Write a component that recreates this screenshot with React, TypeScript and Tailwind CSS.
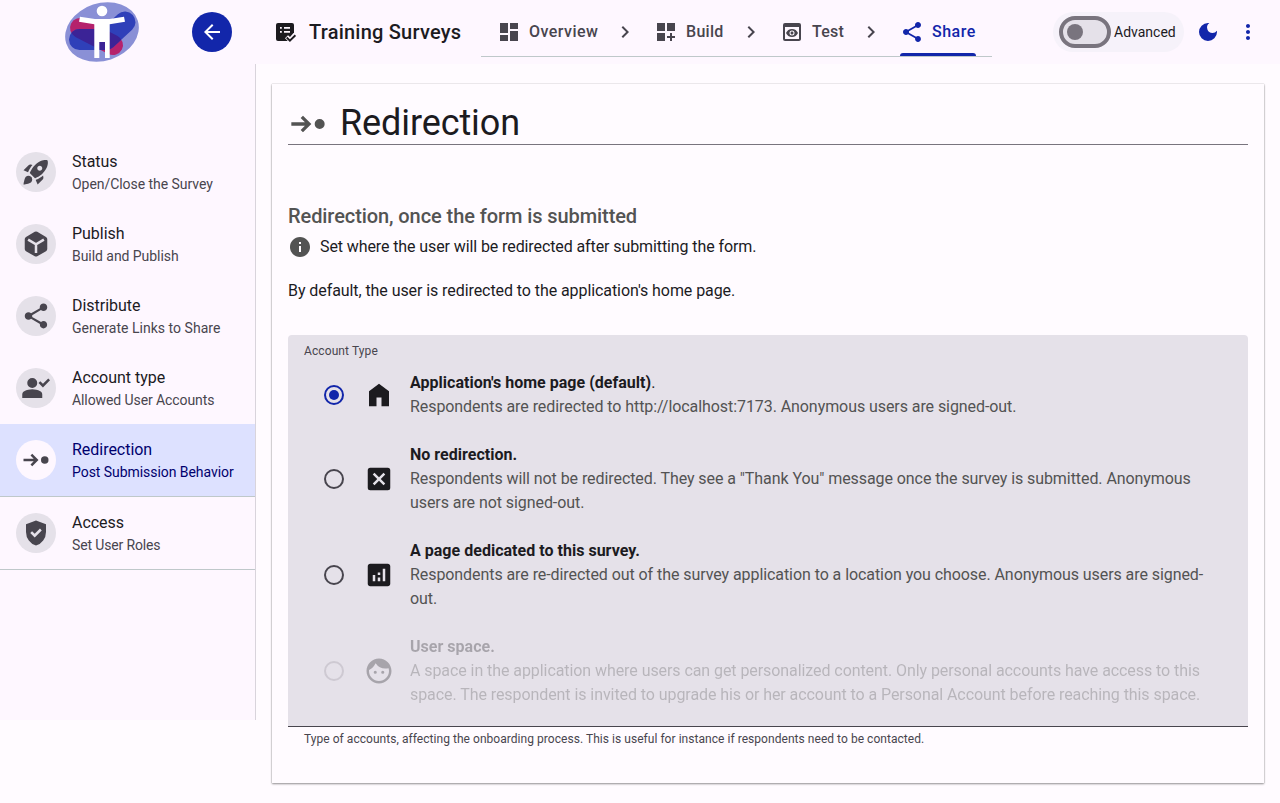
import React from "react";
import { MdDashboard, MdDashboardCustomize, MdPreview, MdShare, MdRocketLaunch, MdFace, MdAnalytics, MdDarkMode, MdMoreVert, MdChevronRight, MdArrowBack, MdInfo } from "react-icons/md";

type IconProps = { className?: string };

const Glyph = ({ d, className }: { d: string; className?: string }) => (
  <svg viewBox="0 0 24 24" fill="currentColor" fillRule="evenodd" className={className}>
    <path d={d} />
  </svg>
);

const StepIcon = (p: IconProps) => <Glyph {...p} d="M19 15a3 3 0 1 1 0-6 3 3 0 0 1 0 6zM9 17l-1.4-1.45L10.15 13H2v-2h8.15L7.6 8.4 9 7l5 5z" />;
const ShieldIcon = (p: IconProps) => <Glyph {...p} d="M12 22q-3.475-.875-5.737-3.988T4 11.1V5l8-3 8 3v6.1q0 3.8-2.262 6.913T12 22zM10.95 15.55l5.65-5.65-1.425-1.425-4.225 4.225-2.1-2.1L7.4 12z" />;
const PersonCheckIcon = (p: IconProps) => <Glyph {...p} d="M17.55 11.5 14 7.95l1.4-1.4 2.15 2.1 4.25-4.25 1.4 1.45zM9 12a4 4 0 1 1 0-8 4 4 0 0 1 0 8zM1 20v-2.8q0-.85.438-1.562T2.6 14.55q1.55-.775 3.15-1.162T9 13t3.25.388 3.15 1.162q.725.375 1.163 1.088T17 17.2V20z" />;
const HomeIcon = (p: IconProps) => <Glyph {...p} d="M4 21V9l8-6 8 6v12h-6v-7h-4v7z" />;
const CrossBoxIcon = (p: IconProps) => <Glyph {...p} d="M8.4 17l3.6-3.6 3.6 3.6 1.4-1.4-3.6-3.6L17 8.4 15.6 7 12 10.6 8.4 7 7 8.4l3.6 3.6L7 15.6zM5 21a2 2 0 0 1-2-2V5a2 2 0 0 1 2-2h14a2 2 0 0 1 2 2v14a2 2 0 0 1-2 2z" />;
const BoxIcon = ({ className }: IconProps) => (
  <svg viewBox="0 0 24 24" className={className}>
    <path fill="currentColor" d="M11 2.2a2 2 0 0 1 2 0l7 4.1a2 2 0 0 1 1 1.7v8a2 2 0 0 1-1 1.7l-7 4.1a2 2 0 0 1-2 0l-7-4.1A2 2 0 0 1 3 16V8a2 2 0 0 1 1-1.7z" />
    <path d="M5.7 8.500 12 12.200l6.300-3.700M12 12.200v7" fill="none" stroke="#e5e1e9" strokeWidth="2" />
  </svg>
);
const SurveyIcon = ({ className }: IconProps) => (
  <svg viewBox="0 0 24 24" className={className}>
    <rect x="3" y="3" width="18" height="18" rx="2" fill="currentColor" />
    <path d="M7 7h1.8v1.7H7zM11 7h6v1.7h-6zM7 11h1.8v1.7H7zM11 11h6v1.7h-6z" fill="#fef7ff" />
    <path d="m12 18.2 3-3 2 1.7L20.5 13H24v9h-8.2z" fill="#fef7ff" />
    <path d="m13.700 17.500 3.200 3.100 5.500-5.400" fill="none" stroke="currentColor" strokeWidth="1.9" />
  </svg>
);

const Logo = () => (
  <svg width="80" height="64" viewBox="0 0 80 64">
    <mask id="ribbon" maskUnits="userSpaceOnUse" x="0" y="0" width="80" height="64">
      <path d="M17.5 39.5H44L63 22" fill="none" stroke="#fff" strokeWidth="21" strokeLinecap="round" strokeLinejoin="round" />
    </mask>
    <ellipse cx="40" cy="32" rx="37.6" ry="28.8" fill="#8a90d6" transform="rotate(-18 40 32)" />
    <path d="M18 28 51 45" stroke="#b5226c" strokeWidth="20" strokeLinecap="round" />
    <path d="M17.5 39.5H44L63 22" fill="none" stroke="#2f40b9" strokeWidth="21" strokeLinecap="round" strokeLinejoin="round" />
    <path d="M18 28 51 45" stroke="#3b2396" strokeWidth="20" strokeLinecap="round" mask="url(#ribbon)" />
    <circle cx="40" cy="11" r="5.3" fill="#fff" />
    <path d="M18 16.7 33 19h14.500L62 16.700l1 5.100-15.300 2.400V58H43V42h-5.700v16h-5V24.200L17 21.800z" fill="#fff" />
  </svg>
);

const steps = [
  { label: "Overview", Icon: MdDashboard, width: "w-[101px]", tracking: "tracking-[0.45px]" },
  { label: "Build", Icon: MdDashboardCustomize, width: "w-[70px]", tracking: "tracking-[0.3px]" },
  { label: "Test", Icon: MdPreview, width: "w-[64px]", tracking: "tracking-[0.2px]" },
  { label: "Share", Icon: MdShare, width: "w-[76px]", tracking: "tracking-[0.5px]", active: true },
];

const nav = [
  { title: "Status", sub: "Open/Close the Survey", Icon: MdRocketLaunch },
  { title: "Publish", sub: "Build and Publish", Icon: BoxIcon },
  { title: "Distribute", sub: "Generate Links to Share", Icon: MdShare, tracking: "tracking-[0.03px]" },
  { title: "Account type", sub: "Allowed User Accounts", Icon: PersonCheckIcon, tracking: "tracking-[-0.09px]" },
  { title: "Redirection", sub: "Post Submission Behavior", Icon: StepIcon, active: true, line: true },
  { title: "Access", sub: "Set User Roles", Icon: ShieldIcon, line: true, tracking: "tracking-[-0.14px]" },
];

const options = [
  { title: "Application's home page (default)", tail: ".", text: "Respondents are redirected to http://localhost:7173. Anonymous users are signed-out.", Icon: HomeIcon, checked: true },
  { title: "No redirection.", text: "Respondents will not be redirected. They see a \"Thank You\" message once the survey is submitted. Anonymous users are not signed-out.", Icon: CrossBoxIcon },
  { title: "A page dedicated to this survey.", text: "Respondents are re-directed out of the survey application to a location you choose. Anonymous users are signed-out.", Icon: MdAnalytics },
  { title: "User space.", text: "A space in the application where users can get personalized content. Only personal accounts have access to this space. The respondent is invited to upgrade his or her account to a Personal Account before reaching this space.", Icon: MdFace, disabled: true },
];

function TopBar() {
  return (
    <header className="flex h-16 items-center bg-[#fef7ff]">
      <div className="ml-[62px] h-16 w-20"><Logo /></div>
      <button className="ml-[50px] grid size-10 place-items-center rounded-full bg-[#1226aa] text-white"><MdArrowBack className="size-6" /></button>
      <SurveyIcon className="ml-[41px] size-6" />
      <h1 className="ml-3 w-[172px] whitespace-nowrap text-[20px] font-medium tracking-[0.22px]">Training Surveys</h1>
      <nav className="mb-[7px] mt-auto flex h-[50px] w-[511px] border-b border-[#bfc8ca] pl-4">
        {steps.map(({ label, Icon, active, width, tracking }, i) => (
          <React.Fragment key={label}>
            {i > 0 && <MdChevronRight className="ml-[15px] mr-[17px] mt-[13px] size-6 shrink-0 text-[#48454e]" />}
            <a className={`flex h-[49px] shrink-0 flex-col justify-between ${width} ${active ? "text-[#1226aa]" : "text-[#48454e]"}`}>
              <span className={`mt-[13px] flex items-center gap-2 whitespace-nowrap text-[16px] font-medium leading-6 ${tracking}`}>
                <Icon className="size-6 shrink-0" />{label}
              </span>
              {active && <span className="h-[3px] rounded-t-[3px] bg-[#1226aa]" />}
            </a>
          </React.Fragment>
        ))}
      </nav>
      <div className="ml-[61px] flex h-10 w-[131px] items-center gap-[3px] rounded-full bg-[#f6f2fa] pl-[6px]">
        <span className="flex h-8 w-[52px] items-center rounded-full border-4 border-[#79747e] bg-[#e5e1e9] pl-1"><span className="size-4 rounded-full bg-[#79747e]" /></span>
        <span className="text-[14px]">Advanced</span>
      </div>
      <MdDarkMode className="ml-3 size-6 text-[#1226aa]" />
      <MdMoreVert className="ml-4 size-6 text-[#1226aa]" />
    </header>
  );
}

function SideNav() {
  return (
    <aside className="h-[656px] w-64 shrink-0 border-r border-[#d9d4dc] bg-[#fef7ff] pt-[72px]">
      {nav.map(({ title, sub, Icon, active, line, tracking }) => (
        <div key={title} className={`flex items-center gap-4 pl-4 ${line ? "h-[73px] border-b border-[#bfc8ca]" : "h-[72px]"} ${active ? "bg-[#dde1ff] text-[#00006e]" : ""}`}>
          <span className={`grid size-10 place-items-center rounded-full text-[#48454e] ${active ? "bg-[#fef7ff]" : "bg-[#e5e1e9]"}`}><Icon className="size-[30px]" /></span>
          <div className="whitespace-nowrap">
            <div className="text-[16px] leading-6 tracking-[-0.03px]">{title}</div>
            <div className={`text-[14px] leading-5 ${tracking ?? "tracking-[-0.05px]"} ${active ? "" : "text-[#48454e]"}`}>{sub}</div>
          </div>
        </div>
      ))}
    </aside>
  );
}

export default function App() {
  return (
    <div className="h-[803px] overflow-hidden bg-[#fffbff] font-['Roboto',sans-serif] text-[#1c1b1f]">
      <TopBar />
      <div className="flex">
        <SideNav />
        <main className="ml-4 mt-5 h-[699px] w-[992px] bg-[#fffbff] px-4 shadow-[0_1px_2px_0_rgba(0,0,0,0.4),0_0_1px_0_rgba(0,0,0,0.3)]">
          <div className="flex h-[61px] items-center border-b border-[#79747e] pt-[18px]">
            <StepIcon className="mt-px size-10 text-[#535353]" />
            <h2 className="ml-3 text-[36px] leading-[44px] tracking-[-0.1px]">Redirection</h2>
          </div>
          <h3 className="mt-[57px] text-[20px] font-medium leading-[28px] tracking-[-0.08px] text-[#535353]">Redirection, once the form is submitted</h3>
          <p className="mt-[5px] flex h-6 items-center gap-2 text-[16px] tracking-[-0.1px]"><MdInfo className="size-6 text-[#535353]" />Set where the user will be redirected after submitting the form.</p>
          <p className="mt-5 text-[16px] leading-6 tracking-[-0.075px]">By default, the user is redirected to the application's home page.</p>
          <section className="mt-8 h-[392px] rounded-t border-b border-[#48454e] bg-[#e5e1e9] px-4 pt-2">
            <div className="text-[12px] leading-4 tracking-[0.1px] text-[#48454e]">Account Type</div>
            <div className="flex flex-col gap-6 pt-3">
              {options.map(({ title, tail, text, Icon, checked, disabled }) => (
                <div key={title} className="flex items-center pl-5">
                  <span className={`grid size-5 shrink-0 place-items-center rounded-full border-2 ${checked ? "border-[#1226aa]" : "border-[#48454e]"} ${disabled ? "opacity-15" : ""}`}>
                    {checked && <span className="size-[10px] rounded-full bg-[#1226aa]" />}
                  </span>
                  <Icon className={`ml-5 size-[30px] shrink-0 ${disabled ? "opacity-30" : ""}`} />
                  <div className={`ml-4 w-[806px] text-[16px] leading-6 ${disabled ? "opacity-30" : ""}`}>
                    <div className="tracking-[0.02px]"><b>{title}</b>{tail}</div>
                    <div className="tracking-[-0.072px] text-[#535353]">{text}</div>
                  </div>
                </div>
              ))}
            </div>
          </section>
          <p className="ml-4 mt-1 text-[12px] leading-4 tracking-[0.045px] text-[#48454e]">Type of accounts, affecting the onboarding process. This is useful for instance if respondents need to be contacted.</p>
        </main>
      </div>
    </div>
  );
}
